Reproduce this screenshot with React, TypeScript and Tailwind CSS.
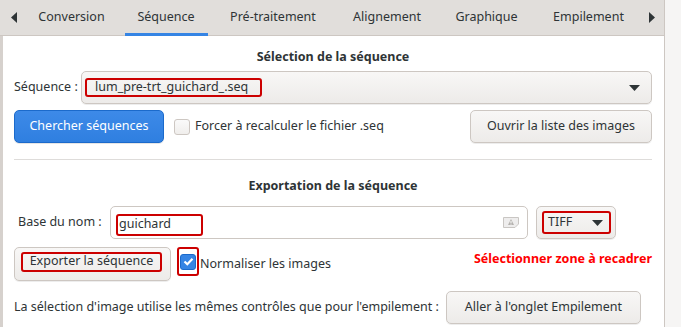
import React from "react";

const font = { fontFamily: '"Noto Sans", "DejaVu Sans", sans-serif' };

function Btn({ children, className = "" }: { children: React.ReactNode; className?: string }) {
  return (
    <div
      className={
        "flex items-center justify-center whitespace-nowrap rounded-[5px] border border-[#cdc7c2] bg-gradient-to-b from-[#f8f7f6] to-[#edebe9] shadow-[0_1px_0_rgba(0,0,0,0.07)] text-[#2e3436] " +
        className
      }
    >
      {children}
    </div>
  );
}

function RedBox({ children, className = "" }: { children: React.ReactNode; className?: string }) {
  return <div className={"rounded-[3px] border-2 border-[#cc0000] flex items-center whitespace-nowrap " + className}>{children}</div>;
}

const tabs: [string, string][] = [
  ["Conversion", "w-[99px]"],
  ["Séquence", "w-[90px]"],
  ["Pré-traitement", "w-[124px]"],
  ["Alignement", "w-[104px]"],
  ["Graphique", "w-[95px]"],
  ["Empilement", "w-[109px]"],
];

export default function App() {
  return (
    <div className="w-[681px] h-[327px] overflow-hidden flex bg-[#f6f5f4] text-[12.5px] text-[#2e3436]" style={font}>
      <div className="w-[665px] shrink-0 flex flex-col border-r border-[#cdc7c2]">
        {/* tab bar */}
        <div className="h-[36px] shrink-0 flex items-stretch bg-[#e1dedb] border-b border-[#cdc7c2]">
          <div className="w-[22px] flex items-center justify-center pl-[6px]">
            <svg width="6" height="11" viewBox="0 0 6 11"><path d="M6 0 L0 5.5 L6 11 Z" fill="#2e3436" /></svg>
          </div>
          {tabs.map(([t, w], i) => (
            <div key={t} className={"relative flex items-center justify-center whitespace-nowrap pb-[1px] " + w}>
              {t}
              {i === 1 && <div className="absolute left-[4px] right-[3px] bottom-[-1px] h-[3px] bg-[#3584e4]" />}
            </div>
          ))}
          <div className="flex-1 flex items-center justify-start pl-[6px]">
            <svg width="6" height="11" viewBox="0 0 6 11"><path d="M0 0 L6 5.5 L0 11 Z" fill="#2e3436" /></svg>
          </div>
        </div>
        {/* content */}
        <div className="flex-1 bg-white border-l-[3px] border-[#d6d1cd] pl-[11px] pr-[12px] flex flex-col">
          <div className="h-[34px] flex items-center justify-center font-bold pt-[8px]">Sélection de la séquence</div>
          <div className="flex items-center mt-[1px]">
            <div className="w-[67px] whitespace-nowrap">Séquence :</div>
            <Btn className="flex-1 h-[33px] !justify-between pl-[3px] pr-[11px]">
              <RedBox className="h-[19px] w-[177px] pl-[8px]">lum_pre-trt_guichard_.seq</RedBox>
              <svg width="11" height="6" viewBox="0 0 11 6"><path d="M0 0 L11 0 L5.5 6 Z" fill="#2e3436" /></svg>
            </Btn>
          </div>
          <div className="flex items-center mt-[6px]">
            <div className="w-[150px] h-[33px] rounded-[5px] border border-[#1b6acb] bg-gradient-to-b from-[#3d8ae8] to-[#2f7fe0] text-white flex items-center justify-center shadow-[0_1px_0_rgba(0,0,0,0.1)]">
              Chercher séquences
            </div>
            <div className="ml-[10px] w-[16px] h-[16px] rounded-[3px] border border-[#cdc7c2] bg-gradient-to-b from-[#fafafa] to-[#f0eeec]" />
            <div className="ml-[5px] flex-1 whitespace-nowrap">Forcer à recalculer le fichier .seq</div>
            <Btn className="w-[182px] h-[33px]">Ouvrir la liste des images</Btn>
          </div>
          <div className="mt-[16px] h-px bg-[#dedcda]" />
          <div className="h-[26px] mt-[13px] flex items-center justify-center font-bold">Exportation de la séquence</div>
          <div className="flex items-center mt-[7px]">
            <div className="w-[96px] pl-[4px] whitespace-nowrap">Base du nom :</div>
            <div className="w-[418px] h-[33px] rounded-[5px] border border-[#cdc7c2] bg-white flex items-center justify-between pl-[5px] pr-[8px]">
              <RedBox className="w-[87px] h-[22px] pl-[1px] mt-[4px]">guichard</RedBox>
              <svg width="16" height="11" viewBox="0 0 16 11">
                <path d="M0.5 0.5 H15.5 V7 L12 10.5 H0.5 Z" fill="#eeeded" stroke="#c9c6c3" />
                <path d="M8 2 L11 8 H5 Z" fill="#b5b2af" />
                <rect x="7.5" y="4" width="1" height="2" fill="#fff" />
                <rect x="7.5" y="6.6" width="1" height="0.9" fill="#fff" />
              </svg>
            </div>
            <Btn className="ml-[8px] w-[80px] h-[33px] !justify-start pl-[5px]">
              <RedBox className="w-[69px] h-[23px] !justify-between pl-[4px] pr-[6px]">
                <span>TIFF</span>
                <svg width="11" height="6" viewBox="0 0 11 6"><path d="M0 0 L11 0 L5.5 6 Z" fill="#2e3436" /></svg>
              </RedBox>
            </Btn>
          </div>
          <div className="flex items-center mt-[8px]">
            <Btn className="w-[157px] h-[34px] !justify-start pl-[6px]">
              <RedBox className="w-[141px] h-[20px] justify-center mb-[5px]">Exporter la séquence</RedBox>
            </Btn>
            <RedBox className="ml-[6px] w-[22px] h-[29px] justify-center mb-[5px]">
              <div className="w-[16px] h-[16px] rounded-[3px] bg-[#3584e4] border border-[#1b6acb] flex items-center justify-center">
                <svg width="11" height="9" viewBox="0 0 11 9"><path d="M1.5 4.5 L4.3 7.2 L9.5 1.8" fill="none" stroke="#fff" strokeWidth="2.2" /></svg>
              </div>
            </RedBox>
            <div className="ml-[1px] flex-1 whitespace-nowrap">Normaliser les images</div>
            <div className="font-bold text-[#ff0000] mb-[10px] whitespace-nowrap">Sélectionner zone à recadrer</div>
          </div>
          <div className="flex items-center mt-[10px]">
            <div className="whitespace-nowrap">La sélection d'image utilise les mêmes contrôles que pour l'empilement :</div>
            <Btn className="ml-[7px] w-[195px] h-[33px]">Aller à l'onglet Empilement</Btn>
          </div>
        </div>
      </div>
      <div className="flex-1 mt-[2px] bg-[#f6f5f4] rounded-tl-[4px]" />
    </div>
  );
}
